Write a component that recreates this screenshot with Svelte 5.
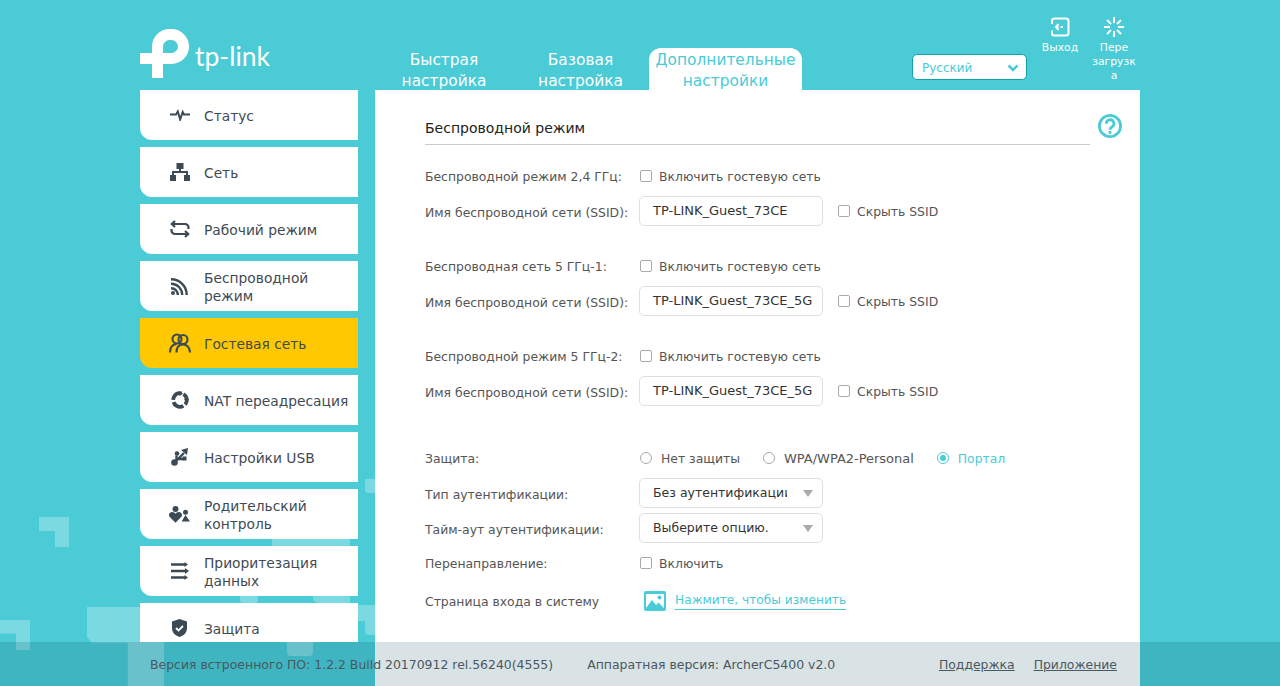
<script>
  const nav = [
    { label: 'Статус', icon: 'status' },
    { label: 'Сеть', icon: 'net' },
    { label: 'Рабочий режим', icon: 'mode' },
    { label: 'Беспроводной режим', icon: 'wifi' },
    { label: 'Гостевая сеть', icon: 'guest', active: true },
    { label: 'NAT переадресация', icon: 'nat' },
    { label: 'Настройки USB', icon: 'usb' },
    { label: 'Родительский контроль', icon: 'parent' },
    { label: 'Приоритезация данных', icon: 'qos' },
    { label: 'Защита', icon: 'shield' }
  ];
  const nets = [
    { label: 'Беспроводной режим 2,4 ГГц:', ssid: 'TP-LINK_Guest_73CE' },
    { label: 'Беспроводная сеть 5 ГГц-1:', ssid: 'TP-LINK_Guest_73CE_5G' },
    { label: 'Беспроводной режим 5 ГГц-2:', ssid: 'TP-LINK_Guest_73CE_5G' }
  ];
</script>

<div class="page">
  <div class="deco d1"></div>
  <div class="deco d2"></div>
  <div class="deco d3"></div>
  <div class="deco d4"></div>
  <div class="deco d5"></div>
  <div class="deco d6"></div>
  <div class="deco d6b"></div>
  <div class="deco d7"></div>
  <div class="deco d8"></div>
  <div class="deco d9"></div>

  <div class="wrap">
    <header class="top">
      <div class="logo">
        <svg width="50" height="50" viewBox="0 0 50 50" fill="none" stroke="#fff" stroke-width="11">
          <path d="M17.500 49V17.500a12 12 0 0 1 12-12h2a12 12 0 0 1 0 24H0" />
        </svg>
        <span class="logotext">tp-link</span>
      </div>
      <nav class="tabs">
        <div class="tab t1">Быстрая настройка</div>
        <div class="tab t2">Базовая настройка</div>
        <div class="tab t3 on">Дополнительные настройки</div>
      </nav>
      <div class="lang">
        <span>Русский</span>
        <svg width="12" height="8" viewBox="0 0 12 8" fill="none" stroke="#4acbd6" stroke-width="2.600"><path d="M1.500 1.500 6 6l4.500-4.500" /></svg>
      </div>
      <div class="act">
        <svg width="20" height="20" viewBox="0 0 20 20" fill="none" stroke="#fff" stroke-width="2">
          <path d="M4 1.500h12a2.500 2.500 0 0 1 2.500 2.500v12a2.500 2.500 0 0 1-2.500 2.500H4a2 2 0 0 1-2-2v-3M2 7V4a2.500 2.500 0 0 1 2-2.500" />
          <path d="M13 10H10.500M8.500 10H6.500M8.500 7 6 10l2.500 3" />
        </svg>
        <span>Выход</span>
      </div>
      <div class="act reboot">
        <svg width="20" height="20" viewBox="0 0 20 20" fill="none" stroke="#fff" stroke-width="2">
          <path d="M10 0v6M10 14v6M0 10h6M14 10h6M3 3l4 4M13 13l4 4M17 3l-4 4M7 13l-4 4" />
        </svg>
        <span>Пере<br />загрузк<br />а</span>
      </div>
    </header>

    <div class="body">
      <aside class="side">
        {#each nav as n}
          <div class="item" class:active={n.active}>
            <span class="ic">
              {#if n.icon === 'status'}
                <svg width="20" height="12" viewBox="0 0 20 12" fill="none" stroke="#3b4a55" stroke-width="2"><path d="M0 5.500h6l1.800-3 2.400 8 2.500-7.500 1.300 2.500H20" /></svg>
              {:else if n.icon === 'net'}
                <svg width="20" height="18" viewBox="0 0 20 18" fill="#3b4a55"><rect x="6.500" y="0" width="7" height="6" /><rect x="0" y="12" width="6" height="6" /><rect x="14" y="12" width="6" height="6" /><path d="M9 5h2v3h7v5h-2v-3H4v3H2V8h7z" /></svg>
              {:else if n.icon === 'mode'}
                <svg width="20" height="18" viewBox="0 0 20 18" fill="none" stroke="#3b4a55" stroke-width="2.200"><path d="M5 1 1.800 4 5 7M2.500 4H15a3.500 3.500 0 0 1 3.500 3.500V9M15 11l3.200 3L15 17M17.500 14H5a3.500 3.500 0 0 1-3.500-3.500V9" /></svg>
              {:else if n.icon === 'wifi'}
                <svg width="17" height="17" viewBox="0 0 17 17" fill="none" stroke="#3b4a55" stroke-width="2.400"><path d="M0 1.300A15.500 15.500 0 0 1 15.700 17M0 5.800A11 11 0 0 1 11.200 17M0 10.200A6.600 6.600 0 0 1 6.800 17" /><circle cx="2" cy="15" r="2" fill="#3b4a55" stroke="none" /></svg>
              {:else if n.icon === 'guest'}
                <svg width="22" height="20" viewBox="0 0 22 20" fill="none" stroke="#3b4a55" stroke-width="2.100"><circle cx="8" cy="6" r="4.500" /><circle cx="14" cy="6.500" r="4.500" /><path d="M1 19.500c0-5 2.500-8 6.500-8.500M21 19.500c0-5-3-8-7-8s-6.500 3-6.500 8" /></svg>
              {:else if n.icon === 'nat'}
                <svg width="18" height="18" viewBox="0 0 18 18" fill="#3b4a55">
                  <circle cx="9" cy="9" r="6.800" fill="none" stroke="#3b4a55" stroke-width="3.800" stroke-dasharray="12 2.200" transform="rotate(-60 9 9)" />
                  <path d="M8.500 0 12 2.500 8.500 5zM18 8l-2.500 3.500L13 8zM2.500 14.500l2.500-3 1.500 4z" />
                </svg>
              {:else if n.icon === 'usb'}
                <svg width="17" height="18" viewBox="0 0 17 18" fill="#3b4a55"><circle cx="3.500" cy="14.500" r="3.300" /><path d="M3.500 14.500 13 5M5.500 12V7.500M7 11h6" fill="none" stroke="#3b4a55" stroke-width="2.400" /><path d="M10 2 17 0l-1 7z" /><circle cx="6" cy="5.500" r="2.300" /><rect x="11.500" y="8.500" width="4" height="4" /></svg>
              {:else if n.icon === 'parent'}
                <svg width="21" height="17" viewBox="0 0 21 17" fill="#3b4a55"><circle cx="6.500" cy="3" r="3" /><path d="M6.500 16.800 0.800 11c-2-2.500 0-5 2.500-5 1.300 0 2.500.7 3.200 1.800C7.200 6.700 8.400 6 9.700 6c2.500 0 4.500 2.500 2.500 5z" /><circle cx="16.500" cy="6.200" r="2.500" /><path d="M16.500 9 21 15.500H12.500l1-1.500z" /></svg>
              {:else if n.icon === 'qos'}
                <svg width="18" height="18" viewBox="0 0 18 18" fill="none" stroke="#3b4a55" stroke-width="2.400"><path d="M0 2.500h14M0 9h15M0 15.500h14" /><path d="M13.500 0v5l3.500-2.500zM14 6v6l4-3zM13.500 13v5l3.500-2.500z" fill="#3b4a55" stroke="none" /></svg>
              {:else}
                <svg width="15" height="18" viewBox="0 0 15 18" fill="#3b4a55"><path d="M7.500 0 15 2.500V9c0 4.500-3 7.500-7.500 9C3 16.500 0 13.500 0 9V2.500z" /><path d="M4 9l2.500 2.500L11 7" fill="none" stroke="#fff" stroke-width="1.800" /></svg>
              {/if}
            </span>
            <span class="lbl">{n.label}</span>
          </div>
        {/each}
      </aside>

      <main class="content">
        <div class="head">
          <h2>Беспроводной режим</h2>
          <svg class="help" width="24" height="24" viewBox="0 0 24 24" fill="none" stroke="#4acbd6" stroke-width="2.800">
            <circle cx="12" cy="12" r="10.600" />
            <path d="M8.300 9.700a3.800 3.800 0 1 1 5.800 3.100c-1.500.9-2.100 1.500-2.100 3" />
            <circle cx="12" cy="18.400" r="1.600" fill="#4acbd6" stroke="none" />
          </svg>
        </div>

        {#each nets as n}
          <section class="net">
            <div class="row r1">
              <label class="k">{n.label}</label>
              <span class="cb"></span><span class="v">Включить гостевую сеть</span>
            </div>
            <div class="row r2">
              <label class="k">Имя беспроводной сети (SSID):</label>
              <div class="field">{n.ssid}</div>
              <span class="cb hide"></span><span class="v">Скрыть SSID</span>
            </div>
          </section>
        {/each}

        <div class="row sec">
          <label class="k">Защита:</label>
          <span class="rd"></span><span class="v rl">Нет защиты</span>
          <span class="rd"></span><span class="v rl wpa">WPA/WPA2-Personal</span>
          <span class="rd on"></span><span class="v sel">Портал</span>
        </div>
        <div class="row dd">
          <label class="k">Тип аутентификации:</label>
          <div class="field select"><span class="clip">Без аутентификации</span><i></i></div>
        </div>
        <div class="row dd d-b">
          <label class="k">Тайм-аут аутентификации:</label>
          <div class="field select"><span class="clip">Выберите опцию.</span><i></i></div>
        </div>
        <div class="row redir">
          <label class="k">Перенаправление:</label>
          <span class="cb"></span><span class="v">Включить</span>
        </div>
        <div class="row login">
          <label class="k">Страница входа в систему</label>
          <svg class="pic" width="22" height="20" viewBox="0 0 22 20">
            <rect width="22" height="20" rx="2" fill="#4acbd6" />
            <rect x="2" y="3" width="18" height="14" fill="#fff" />
            <circle cx="15.500" cy="6.500" r="2" fill="#4acbd6" />
            <path d="M2 17l6-8 4 5 2.500-2.500L20 17z" fill="#4acbd6" />
          </svg>
          <a>Нажмите, чтобы изменить</a>
        </div>
      </main>
    </div>
  </div>

  <footer class="foot">
    <span class="f1">Версия встроенного ПО: 1.2.2 Build 20170912 rel.56240(4555)</span>
    <span class="f2">Аппаратная версия: ArcherC5400 v2.0</span>
    <span class="grow"></span>
    <a>Поддержка</a>
    <a>Приложение</a>
  </footer>
</div>

<style>
  :global(body) { margin: 0; }
  .page {
    position: relative; width: 1280px; height: 686px; overflow: hidden;
    background: #4acbd6; font-family: "DejaVu Sans", Verdana, sans-serif; font-size: 12.4px; color: #4a4f55;
  }
  .deco { position: absolute; background: #7bd9e1; }
  .d1 { left: 39px; top: 517px; width: 30px; height: 30px; clip-path: polygon(0 0,100% 0,100% 100%,53% 100%,53% 47%,0 47%); }
  .d2 { left: 0; top: 620px; width: 30px; height: 30px; clip-path: polygon(0 0,100% 0,100% 100%,53% 100%,53% 45%,0 45%); }
  .d3 { left: 87px; top: 607px; width: 77px; height: 79px; clip-path: polygon(0 0,100% 0,100% 100%,53% 100%,53% 45%,6% 45%,0 38%); }
  .d4 { left: 272px; top: 530px; width: 78px; height: 30px; }
  .d5 { left: 365px; top: 479px; width: 10px; height: 14px; border-radius: 0 0 0 3px; }
  .d6 { left: 358px; top: 605px; width: 17px; height: 16px; }
  .d6b { left: 365px; top: 605px; width: 10px; height: 30px; border-radius: 0 0 0 4px; }
  .d7 { left: 240px; top: 590px; width: 18px; height: 13px; border-radius: 0 0 3px 3px; }
  .d8 { left: 313px; top: 590px; width: 37px; height: 13px; border-radius: 0 0 0 5px; }
  .d9 { left: 287px; top: 630px; width: 26px; height: 26px; border-radius: 0 0 4px 4px; }

  .wrap { position: relative; width: 1000px; margin: 0 auto; }
  .top { height: 90px; display: flex; align-items: flex-end; }
  .logo { width: 240px; height: 90px; display: flex; align-items: flex-start; padding-top: 29px; box-sizing: border-box; flex: none; }
  .logotext { color: #fff; font: 400 26.500px/1 Lato, sans-serif; margin: 14px 0 0 5px; }
  .tabs { display: flex; flex: none; align-self: flex-end; }
  .tab { box-sizing: border-box; height: 42px; color: #fff; font-size: 15.400px; line-height: 21px; text-align: center; padding: 2px 0 0; border-radius: 12px 12px 0 0; }
  .t1 { width: 128px; }
  .t2 { width: 137px; margin-left: 4px; }
  .t3 { width: 153px; background: #fff; color: #4acbd6; }
  .lang {
    flex: none; box-sizing: border-box; width: 115px; height: 26px; margin: 0 0 10px 110px; background: #fff;
    border: 1px solid #0fa3ae; border-radius: 5px; display: flex; align-items: center; justify-content: space-between;
    padding: 1px 7px 0 9px; color: #4acbd6; font-size: 12px;
  }
  .act { align-self: flex-start; flex: none; width: 36px; margin: 17px 0 0 15px; color: #fff; font-size: 10.800px; line-height: 14px; text-align: center; display: flex; flex-direction: column; align-items: center; }
  .act svg { margin-bottom: 4px; }
  .reboot { width: 44px; margin-left: 14px; }

  .body { display: flex; align-items: flex-start; gap: 17px; }
  .side { width: 218px; height: 552px; overflow: hidden; flex: none; display: flex; flex-direction: column; gap: 7px; }
  .item { height: 50px; flex: none; background: #fff; border-radius: 0 0 0 12px; display: flex; align-items: center; color: #3f4a54; font-size: 13.800px; line-height: 18px; }
  .item.active { background: #ffc800; }
  .ic { width: 64px; flex: none; display: flex; justify-content: center; padding-left: 15px; box-sizing: border-box; }
  .lbl { width: 150px; padding-top: 2px; }

  .content { flex: 1; height: 596px; background: #fff; box-sizing: border-box; padding: 0 50px; position: relative; }
  .head { height: 55px; box-sizing: border-box; border-bottom: 1px solid #ccc; display: flex; align-items: center; position: relative; padding-top: 21px; }
  h2 { margin: 0; font-size: 14px; font-weight: 400; color: #222; line-height: 20px; }
  .help { position: absolute; left: 673px; top: 24px; }
  .row { display: flex; align-items: center; color: #555; }
  .k { width: 214px; flex: none; }
  .r2 .k, .dd .k { padding-top: 2px; }
  .cb { box-sizing: border-box; width: 12px; height: 12px; border: 1px solid #aaa; border-radius: 2px; flex: none; margin: 0 7px 0 1px; }
  .cb.hide { margin-left: 15px; }
  .v { color: #555; }
  .net { display: flex; flex-direction: column; }
  .r1 { height: 20px; margin-top: 21px; }
  .r2 { height: 30px; margin-top: 10px; }
  .net + .net .r1 { margin-top: 30px; }
  .field { box-sizing: border-box; width: 184px; height: 30px; border: 1px solid #e0e0e0; border-radius: 5px; padding: 0 13px; line-height: 28px; color: #333; flex: none; font-size: 13px; white-space: nowrap; overflow: hidden; }
  .select { position: relative; font-size: 12.500px; }
  .select .clip { display: block; width: 134px; overflow: hidden; }
  .select i { position: absolute; right: 9px; top: 11px; width: 0; height: 0; border: 5.500px solid transparent; border-top: 7px solid #aaa; border-bottom: 0; }
  .sec { height: 20px; margin-top: 42px; }
  .rd { box-sizing: border-box; width: 12px; height: 12px; border: 1px solid #aaa; border-radius: 50%; flex: none; margin: 0 9px 0 1px; position: relative; }
  .rd.on { border-color: #4acbd6; }
  .rd.on::after { content: ""; position: absolute; inset: 2px; border-radius: 50%; background: #4acbd6; }
  .rl { margin-right: 22px; }
  .wpa { font-size: 13px; letter-spacing: -.02px; }
  .sel { color: #4acbd6; }
  .dd { margin-top: 10px; }
  .d-b { margin-top: 5px; }
  .redir { height: 20px; margin-top: 10px; }
  .login { height: 24px; margin-top: 16px; }
  .pic { margin: 0 9px 0 5px; flex: none; }
  .login a { color: #4acbd6; border-bottom: 1px solid #4acbd6; line-height: 17px; font-size: 12.200px; }

  .foot { position: absolute; left: 0; right: 0; bottom: 0; height: 44px; background: rgba(0, 60, 80, .15); display: flex; align-items: center; box-sizing: border-box; padding: 0 163px 0 150px; color: #4a5860; font-size: 12.450px; }
  .f2 { margin-left: 34px; }
  .grow { flex: 1; }
  .foot a { text-decoration: underline; margin-left: 19px; color: #4a5860; font-size: 12.400px; }
</style>
